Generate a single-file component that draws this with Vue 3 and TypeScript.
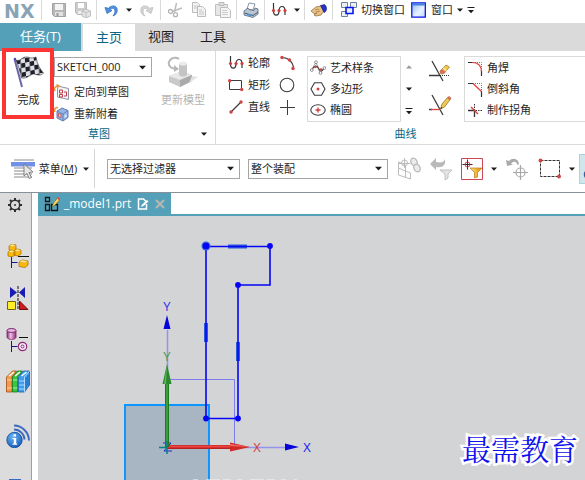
<script setup lang="ts">
import { ref } from 'vue'

interface Tool {
  icon: string
  label: string
}

const tabs = ['主页', '视图', '工具']
const activeTab = ref('主页')

const sketch = ref('SKETCH_000')
const filter = ref('无选择过滤器')
const scope = ref('整个装配')

const sketchTools: Tool[] = [
  { icon: 'orient', label: '定向到草图' },
  { icon: 'reattach', label: '重新附着' },
]
const basicCurves: Tool[] = [
  { icon: 'profile', label: '轮廓' },
  { icon: 'rect', label: '矩形' },
  { icon: 'line', label: '直线' },
]
const plainCurves: Tool[] = [
  { icon: 'arc', label: '圆弧' },
  { icon: 'circle', label: '圆' },
  { icon: 'point', label: '点' },
]
const gallery: Tool[] = [
  { icon: 'spline', label: '艺术样条' },
  { icon: 'polygon', label: '多边形' },
  { icon: 'ellipse', label: '椭圆' },
]
const corners: Tool[] = [
  { icon: 'fillet', label: '角焊' },
  { icon: 'chamfer', label: '倒斜角' },
  { icon: 'corner', label: '制作拐角' },
]
const resources: Tool[] = [
  { icon: 'assembly', label: '装配导航器' },
  { icon: 'constraint', label: '约束导航器' },
  { icon: 'partnav', label: '部件导航器' },
  { icon: 'books', label: '重用库' },
]
</script>

<template>
  <div class="page">
    <svg class="sprite" aria-hidden="true">
      <defs>
        <linearGradient id="gWin" x1="0" y1="0" x2="1" y2="1">
          <stop offset="0" stop-color="#8fb9ee" /><stop offset=".6" stop-color="#e8f3ff" /><stop offset="1" stop-color="#bcd8fa" />
        </linearGradient>
        <linearGradient id="gGold" x1="0" y1="0" x2="1" y2="0">
          <stop offset="0" stop-color="#ffe680" /><stop offset="1" stop-color="#e08a00" />
        </linearGradient>
        <linearGradient id="gPurple" x1="0" y1="0" x2="1" y2="0">
          <stop offset="0" stop-color="#8a2a78" /><stop offset=".4" stop-color="#eac0e2" /><stop offset="1" stop-color="#8a2a78" />
        </linearGradient>
        <radialGradient id="gInfo" cx=".4" cy=".3" r=".8">
          <stop offset="0" stop-color="#6db5f5" /><stop offset="1" stop-color="#0c55b4" />
        </radialGradient>
        <pattern id="check" width="9" height="9" patternUnits="userSpaceOnUse" patternTransform="translate(3 4) rotate(-12) skewX(-8)">
          <rect width="9" height="9" fill="#dfe0e6" />
          <rect width="4.500" height="4.500" fill="#20202a" /><rect x="4.500" y="4.500" width="4.500" height="4.500" fill="#20202a" />
        </pattern>
      </defs>
      <symbol id="down" viewBox="0 0 6 4"><path d="M0 0.500h6L3 3.800z" fill="#1c1c1c" /></symbol>
      <symbol id="up" viewBox="0 0 6 4"><path d="M0 3.500h6L3 0.200z" fill="#9a9a9a" /></symbol>
      <symbol id="more" viewBox="0 0 8 8"><path d="M0.500 1h7v1h-7zM1 4h6L4 7.300z" fill="#1c1c1c" /></symbol>
      <symbol id="save" viewBox="0 0 16 16">
        <path d="M1.500 1.500h13v13h-11l-2-2z" fill="#b7b7b7" stroke="#a2a2a2" /><path d="M4 2h8v6H4z" fill="#f4f4f4" /><path d="M4 10h8v4H4z" fill="#e2e2e2" /><path d="M5.500 11h2v3h-2z" fill="#999" />
      </symbol>
      <symbol id="saveas" viewBox="0 0 16 16">
        <path d="M.5 .5h11v12h-9l-2-2z" fill="#cdcdcd" stroke="#b8b8b8" /><path d="M3 1h6v5H3z" fill="#fff" /><path d="M3 9h4v3H3z" fill="#eee" />
        <path d="M7 9l4-2 4.500 2v5L11 16l-4-2z" fill="#e4e4e4" stroke="#b5b5b5" stroke-width=".8" /><path d="M7 9l4 1.500L15.500 9M11 10.500V16" fill="none" stroke="#c0c0c0" />
      </symbol>
      <symbol id="undo" viewBox="0 0 16 16">
        <path d="M2 5.500l2 6 5-3-2.200-.8C9 5.500 12 6 12 9c0 2-.8 3.500-2 5 3-1 4.500-3.500 4.200-6.500C13.800 3.500 9 2.500 5.400 6.300z" fill="#5290e0" stroke="#2f6ec4" stroke-width=".8" />
      </symbol>
      <symbol id="redo" viewBox="0 0 16 16">
        <path d="M14 5.500l-2 6-5-3 2.200-.8C7 5.500 4 6 4 9c0 2 .8 3.500 2 5C3 13 1.500 10.500 1.800 7.500 2.200 3.500 7 2.500 10.600 6.300z" fill="#d6d6d6" stroke="#bbb" stroke-width=".8" />
      </symbol>
      <symbol id="cut" viewBox="0 0 16 16">
        <path d="M9.500 1L7.500 10M15 6L5 9.500" stroke="#bbb" stroke-width="1.500" /><circle cx="3.500" cy="9.500" r="2" fill="none" stroke="#b4b4b4" stroke-width="1.300" /><circle cx="8.500" cy="12.700" r="2" fill="none" stroke="#b4b4b4" stroke-width="1.300" />
      </symbol>
      <symbol id="copy" viewBox="0 0 16 16">
        <g fill="#f3f3f3" stroke="#bcbcbc"><path d="M1.500 .5h5l2 2v8h-7z" /><path d="M6.500 4.500h5l3 3v7h-8z" /></g><path d="M3 4h4M3 6h3M8 8h3M8 10h5M8 12h5" stroke="#c6c6c6" />
      </symbol>
      <symbol id="paste" viewBox="0 0 16 16">
        <path d="M.5 2.500h12v11H.5z" fill="#e7e7e7" stroke="#c0c0c0" /><path d="M4 .5h5v3H4z" fill="#ddd" stroke="#bbb" /><path d="M5.500 5.500h7l3 3v7h-10z" fill="#f6f6f6" stroke="#bdbdbd" /><path d="M7 8.500h5M7 10.500h6M7 12.500h6" stroke="#ccc" />
      </symbol>
      <symbol id="print" viewBox="0 0 16 16">
        <path d="M6 1l6 1-2 6-6-1z" fill="#fff" stroke="#6b7d92" stroke-width=".8" /><path d="M1 9l4-3 1 1.500 5 1L12 6l3 1v5l-5 3.500L1 13z" fill="#b9c4d0" stroke="#536579" stroke-width=".8" /><path d="M1.500 11L10 13.500 15 10" fill="none" stroke="#475a70" /><path d="M4 12.500l4 1" stroke="#4d98e0" stroke-width="1.500" />
      </symbol>
      <symbol id="profile" viewBox="0 0 16 16">
        <path d="M2.500 1v8c0 5.500 5.500 5.500 5.500 0 0-6 6-6 6 0v4" fill="none" stroke="#333" stroke-width="1.200" /><g fill="#d23c3c"><circle cx="2.500" cy="8.500" r="1.600" /><circle cx="8" cy="8.500" r="1.600" /><circle cx="14" cy="8.500" r="1.600" /></g>
      </symbol>
      <symbol id="hand" viewBox="0 0 16 16">
        <path d="M0 9l5-4 5-1 3 5-3 4-5 1-2-1 3-2-3 .5z" fill="#ecc184" stroke="#947449" stroke-width=".8" /><path d="M9.500 3.500l4-1c3 2 2.500 7-.5 8z" fill="#2631c8" stroke="#111a82" stroke-width=".6" /><path d="M4 8l4-1M5 10l4-1" stroke="#957246" stroke-width=".7" />
      </symbol>
      <symbol id="switch" viewBox="0 0 16 16">
        <g fill="#eaf0f5" stroke="#6e8399"><path d="M.5 .5h6v5h-6zM9.500 .5h6v5h-6zM.5 9.500h6v5h-6z" /></g><path d="M5 5.500h7v6H5z" fill="#e5f1ff" stroke="#0b16ef" stroke-width="1.600" />
      </symbol>
      <symbol id="window" viewBox="0 0 16 16"><path d="M.8 .8h13.500v14.400H.8z" fill="url(#gWin)" stroke="#0b16ef" stroke-width="1.300" /><path d="M1.500 1.500H14v2H1.500z" fill="#4382dd" /></symbol>

      <symbol id="flag" viewBox="0 0 32 32">
        <path d="M1.500 3l7.500 28" stroke="#6a68a8" stroke-width="2" /><circle cx="2" cy="3" r="1.200" fill="#4e40bd" />
        <path d="M3 4c4 2 6-3 10-3s5 2 10 0c1 7 4 12 7.500 16-3 4-7 1-10 1s-6 5-12 4C7 15 5 9 3 4z" fill="url(#check)" stroke="#34343e" stroke-width=".6" />
      </symbol>
      <symbol id="orient" viewBox="0 0 16 16">
        <path d="M3.500 2l11 2.500v11l-11-2.500z" fill="#f5f5f6" stroke="#8d95a2" /><path d="M5.500 6h3v3h-3zM10 8h2.500v4H10M5.500 10.500h3v2.500h-3z" fill="none" stroke="#c33b49" /><path d="M1 7C0 4 1 2 4 2M2.500 .5L5 2 3 4" fill="none" stroke="#ed9438" stroke-width="1.400" />
      </symbol>
      <symbol id="reattach" viewBox="0 0 16 16">
        <path d="M3 5l5-3 6 2.500v7L9 15l-6-3z" fill="#95b6e6" stroke="#4263a0" stroke-width=".8" /><path d="M3 5l6 3 5-3.500M9 8v7" fill="none" stroke="#5779b3" stroke-width=".8" /><path d="M4.500 7.500l2.500 1v3l-2.500-1z" fill="#f4dfe5" stroke="#c33b49" stroke-width=".8" /><path d="M10.500 9l2-1v3l-2 1z" fill="#d4e4fb" /><path d="M1 6C0 3 1 1.500 4 1.500" fill="none" stroke="#ed9438" stroke-width="1.600" />
      </symbol>
      <symbol id="update" viewBox="0 0 32 32">
        <path d="M2 20l13-5 10 4v6l-12 6-11-5z" fill="#c9c9c9" /><path d="M2 20l11 4 12-5-10-4z" fill="#e8e8e8" /><path d="M13 24v7l12-6v-6z" fill="#aaa" /><path d="M12 7h8v12c-2 2-6 2-8 0z" fill="#c4c4c4" /><ellipse cx="16" cy="7.500" rx="4" ry="2" fill="#ececec" /><path d="M25 20l6 1-9 6" fill="#e2e2e2" />
        <path d="M11 13C3 13 1 9 2 6c2-5 7-5 10-3" fill="none" stroke="#b7b7b7" stroke-width="2" /><path d="M7 9l5 4-5 3" fill="#b7b7b7" />
      </symbol>
      <symbol id="rect" viewBox="0 0 16 16"><path d="M1.500 3.500h12v9h-12z" fill="none" stroke="#3c3c3c" /><g fill="#d24242"><circle cx="1.700" cy="3.700" r="1.700" /><circle cx="13.700" cy="12.500" r="1.700" /></g></symbol>
      <symbol id="line" viewBox="0 0 16 16"><path d="M3 13L13 3" stroke="#3c3c3c" stroke-width="1.200" /><g fill="#d24242"><circle cx="3" cy="13" r="1.700" /><circle cx="13" cy="3" r="1.700" /></g></symbol>
      <symbol id="arc" viewBox="0 0 16 16"><path d="M3 2.500C9 2.500 14.500 7 14.500 14" fill="none" stroke="#3c3c3c" stroke-width="1.200" /><g fill="#d24242"><circle cx="3" cy="2.500" r="1.700" /><circle cx="10.500" cy="5" r="1.700" /><circle cx="14" cy="13.500" r="1.700" /></g></symbol>
      <symbol id="circle" viewBox="0 0 16 16"><circle cx="8" cy="8" r="6.800" fill="none" stroke="#3c3c3c" stroke-width="1.100" /></symbol>
      <symbol id="point" viewBox="0 0 16 16"><path d="M8.500 1v15M1 8.500h15" stroke="#3c3c3c" /></symbol>
      <symbol id="spline" viewBox="0 0 16 16"><path d="M1.500 10L6 2l4 11 4-5" fill="none" stroke="#888" stroke-width=".8" /><path d="M1.500 10C5 5 7 5 9 9s3 2 5-1" fill="none" stroke="#444" stroke-width="1.200" /><g fill="#fff" stroke="#777" stroke-width=".8"><circle cx="6" cy="2.300" r="1.400" /><circle cx="1.800" cy="10" r="1.400" /><circle cx="10.500" cy="13" r="1.400" /><circle cx="14.500" cy="8" r="1.400" /></g><circle cx="5.500" cy="7" r="1.200" fill="#d24242" /><circle cx="11" cy="9.500" r="1.200" fill="#d24242" /></symbol>
      <symbol id="polygon" viewBox="0 0 16 16"><path d="M4.500 1.800h7L15 8l-3.500 6.200h-7L1 8z" fill="none" stroke="#3c3c3c" stroke-width="1.100" /><circle cx="8" cy="8" r="1.500" fill="#d24242" /></symbol>
      <symbol id="ellipse" viewBox="0 0 16 16"><ellipse cx="8" cy="8" rx="7.200" ry="5.200" fill="none" stroke="#3c3c3c" stroke-width="1.100" /><path d="M8 5.500v5M5.500 8h5" stroke="#d24242" stroke-width="1.400" /></symbol>
      <symbol id="trim" viewBox="0 0 24 24"><path d="M4 2l11 20M1 16.500h11" fill="none" stroke="#3c3c3c" stroke-width="1.300" /><path d="M12 16.500h10" stroke="#333" stroke-dasharray="1 1" /><path d="M12 12l6-6 3.500 2-5.500 6.500-3 .5z" fill="#f0ca54" stroke="#a4812c" stroke-width=".8" /><path d="M12 12l2-2 3.500 3-1.500 1.500-3 .5z" fill="#dc6a5e" /><path d="M15 9l3.500 2.500" stroke="#fff6c2" /></symbol>
      <symbol id="extend" viewBox="0 0 24 24"><path d="M4 2l11 20M1 16.500h3" fill="none" stroke="#3c3c3c" stroke-width="1.300" /><path d="M3 16.500h9" stroke="#df3f3f" stroke-width="1.300" /><path d="M12.500 16l1.500-5 6-7 2.500 2-6 8z" fill="#f0ca54" stroke="#8f752c" stroke-width=".8" /><path d="M19 5l2-2 2.500 2-2 2.300z" fill="#d36d58" /><path d="M12.500 16l.7-2 1.300 1z" fill="#222" /></symbol>
      <symbol id="fillet" viewBox="0 0 16 16"><path d="M1 2.500h5M14.500 10v6" stroke="#333" stroke-width="1.200" /><path d="M6 2.500h8.500V10" fill="none" stroke="#777" stroke-dasharray="1 1" /><path d="M5 2.500c6 0 9.500 3 9.500 9" fill="none" stroke="#df3f3f" stroke-width="1.200" /></symbol>
      <symbol id="chamfer" viewBox="0 0 16 16"><path d="M1 2.500h5M14.500 10v6" stroke="#333" stroke-width="1.200" /><path d="M6 2.500h8.500V10" fill="none" stroke="#777" stroke-dasharray="1 1" /><path d="M6 2.500l8.500 8" fill="none" stroke="#df3f3f" stroke-width="1.200" /></symbol>
      <symbol id="corner" viewBox="0 0 16 16"><path d="M1 8.500h6.500V15" fill="none" stroke="#333" stroke-width="1.300" /><path d="M7.500 2v6.500H15" fill="none" stroke="#333" stroke-dasharray="1.500 1" /><path d="M4 5l7 7" stroke="#df3f3f" stroke-width="1.400" /></symbol>

      <symbol id="menu" viewBox="0 0 24 22"><path d="M3 2h20M3 10h18M3 13h18M3 16h18M3 19h18" stroke="#8a8a8a" stroke-width="1" /><path d="M0 4h24v4.500H0z" fill="#6f90e6" /><path d="M13 6l9 8-4 .5 2.500 5-2.300 1-2.200-5-3 2.500z" fill="#e7e7e7" stroke="#777" stroke-width=".9" /></symbol>
      <symbol id="chain" viewBox="0 0 24 24"><g fill="none" stroke="#bcbcbc"><path d="M1.500 5v13l12 4v-6l-5-2V8l-7-3M1.500 11l7 3v6M7.500 1v10M2 6.500h11" /><circle cx="7.500" cy="6" r="3" /></g><g fill="#ececec" stroke="#bababa" stroke-width="1.400"><ellipse cx="17" cy="5" rx="3" ry="4" transform="rotate(-25 17 5)" /><ellipse cx="20" cy="11" rx="3" ry="4" transform="rotate(-25 20 11)" /></g></symbol>
      <symbol id="resetfilter" viewBox="0 0 24 24"><path d="M1 7l6-6v4c6 1 8 0 9-3 1 6-2 9-9 8v3z" fill="#b9b9b9" /><path d="M11 13h12l-4 4v4l-3 2v-6z" fill="#e5e5e5" stroke="#c0c0c0" /></symbol>
      <symbol id="filter" viewBox="0 0 22 22"><path d="M.5 .5h21v21H.5z" fill="#fff" stroke="#cd4652" /><g fill="none" stroke="#2a2a2a"><path d="M6.500 1.500v10M1.500 6.500h10" /><circle cx="6.500" cy="6.500" r="2.500" stroke="#cd4652" /></g><path d="M9 10h12l-4.500 4.500V19l-3 1v-5.500z" fill="url(#gGold)" stroke="#b5791a" stroke-width=".7" /></symbol>
      <symbol id="snapback" viewBox="0 0 24 24"><path d="M1 3l1 6 6-1.500-2-1C9 3.500 12 4.500 12 7.500h2C14 2 8-.5 4 4z" fill="#aaa" /><g fill="none" stroke="#a8a8a8" stroke-width="1.200"><path d="M15.500 8v15M8 15.500h15" /><circle cx="15.500" cy="15.500" r="4.500" /></g></symbol>
      <symbol id="marquee" viewBox="0 0 24 24"><path d="M3.500 3.500h19v16h-19z" fill="none" stroke="#333" stroke-dasharray="3 1" /><g fill="#d24242"><circle cx="3.500" cy="3.500" r="2" /><circle cx="22" cy="19.500" r="2" /></g></symbol>
      <symbol id="curveon" viewBox="0 0 24 24"><path d="M4 21c-3-4-1-7 3-8M7 21c5 0 8-3 8-8" fill="none" stroke="#3d5a9a" stroke-width="1.600" /></symbol>

      <symbol id="gear" viewBox="0 0 14 14"><circle cx="7" cy="7" r="4.700" fill="none" stroke="#2e2e2e" stroke-width="1.500" /><path d="M7 0v2.500M7 11.500V14M0 7h2.500M11.500 7H14M2 2l1.800 1.800M10.200 10.200L12 12M12 2l-1.800 1.800M3.800 10.200L2 12" stroke="#2e2e2e" stroke-width="2" /><circle cx="7" cy="7" r="1" fill="#2e2e2e" /></symbol>
      <symbol id="assembly" viewBox="0 0 24 24">
        <path d="M5.500 12v12M5.500 18.500h6" fill="none" stroke="#14148f" /><path d="M12 12.500h11" stroke="#111" />
        <g fill="#ffb90d" stroke="#a66b00" stroke-width=".7"><path d="M3 2l3-2 4 1v4L7 7 3 6zM2 8l3-2 4 1v4l-3 2-4-1zM8 7l3-2 4 1v4l-3 2-4-1zM13 18l3-2 6 1v4l-3 2.500-6-1z" /></g>
        <path d="M3 2l4 1 3-2-4-1zM2 8l4 1 3-2-4-1zM8 7l4 1 3-2-4-1zM13 18l6 1 3-2-6-1z" fill="#ffe88a" stroke="#c38300" stroke-width=".4" />
      </symbol>
      <symbol id="constraint" viewBox="0 0 24 24"><path d="M4 1v11l7-5.500zM19 1v11l-6-5.500z" fill="#1a1ab4" /><path d="M12 0v24" stroke="#111" stroke-dasharray="3 1" /><path d="M1.500 15.500h8v8h-8z" fill="#ffee28" stroke="#6e6600" /><path d="M13.500 15v8.500h8.500z" fill="#cf1b1b" stroke="#6c0e0e" /></symbol>
      <symbol id="partnav" viewBox="0 0 24 24"><path d="M1 2.500v7c1 2.500 8 2.500 9 0v-7z" fill="url(#gPurple)" stroke="#7f256f" stroke-width=".8" /><ellipse cx="5.500" cy="2.500" rx="4.500" ry="2" fill="#e3b7da" stroke="#7f256f" /><path d="M5.500 13v11M5.500 18.500h6" stroke="#14148f" /><path d="M13 9.500h9" stroke="#111" /><circle cx="16.500" cy="18.500" r="4.200" fill="#f7e7f4" stroke="#8e2c7c" stroke-width="1.200" /><circle cx="16.500" cy="18.500" r="1.500" fill="none" stroke="#8e2c7c" /></symbol>
      <symbol id="books" viewBox="0 0 24 24">
        <g stroke-width=".8"><path d="M0.500 7l6-6h4l-4.500 6v15H.5z" fill="#f49a49" stroke="#a34d10" /><path d="M6.500 7l5-6h5l-5 6v15h-5z" fill="#38c93c" stroke="#10741a" /><path d="M12.500 7l5-6h6v14l-5 7h-6z" fill="#3d9df0" stroke="#135ea9" /></g>
        <path d="M3 6l5-4M9 6l5-4M15.500 6l5-4" stroke="#fff" stroke-width="1.500" /><path d="M18.500 7l5-6M18.500 7v15M1 10h5M1 18h5M7 10h4.500M7 18h4.500M13 11h5.500M13 15h5.500M13 19h5.500" stroke="#ffffff99" /><path d="M20 7v12M22 5v11" stroke="#1563b8" />
      </symbol>
      <symbol id="info" viewBox="0 0 24 24"><g fill="none" stroke="#3c68bd" stroke-width="1.900"><path d="M8 1.500c8 0 15 7 15 15M8 5.500c6 0 10.500 5 10.500 10M8 9c4 0 7 3 7 7" /></g><circle cx="8.500" cy="16" r="7.700" fill="url(#gInfo)" stroke="#114b9b" stroke-width=".8" /><path d="M7.500 10.200h2.500v2.200H7.500zM6.500 14h3.700v5.500h1v1.300H6.500v-1.300h1.300v-4.200H6.500z" fill="#fff" /></symbol>
      <symbol id="doc" viewBox="0 0 24 24"><path d="M3 1h12v21H3z" fill="#386bc0" /></symbol>
      <symbol id="part" viewBox="0 0 16 16"><path d="M1.500 1.500h4v4h-4zM1.500 8.500h4v6h-4zM7.500 8.500h6v6h-6z" fill="none" stroke="#161616" stroke-width="1.300" /><path d="M8 11l1.500-4 4-5 2 2-4.500 5z" fill="#ffd95c" stroke="#725f20" stroke-width=".6" /><path d="M13 2l1.500-1L16 3l-1 1.300z" fill="#e24747" /></symbol>
      <symbol id="edited" viewBox="0 0 12 12"><path d="M9.500 6v5h-8V1h5l3 3" fill="none" stroke="#fff" stroke-width="1.500" /><path d="M4 9l1-2.500L10 2l1.500 1.500L6.500 8z" fill="#fff" /></symbol>
      <symbol id="close" viewBox="0 0 10 10"><path d="M1 1l8 8M9 1L1 9" stroke="#b9b7b5" stroke-width="2" /></symbol>
    </svg>

    <header class="quick">
      <span class="logo">NX</span>
      <i class="sep"></i>
      <button class="qb first" aria-label="保存"><svg class="i16"><use href="#save" /></svg></button>
      <button class="qb" aria-label="另存为"><svg class="i16"><use href="#saveas" /></svg></button>
      <i class="sep"></i>
      <button class="qb" aria-label="撤消"><svg class="i16"><use href="#undo" /></svg></button>
      <button class="drop" aria-label="撤消列表"><svg class="tri"><use href="#down" /></svg></button>
      <button class="qb" aria-label="重做"><svg class="i16"><use href="#redo" /></svg></button>
      <i class="sep"></i>
      <button class="qb" aria-label="剪切"><svg class="i16"><use href="#cut" /></svg></button>
      <button class="qb" aria-label="复制"><svg class="i16"><use href="#copy" /></svg></button>
      <button class="qb" aria-label="粘贴"><svg class="i16"><use href="#paste" /></svg></button>
      <i class="sep"></i>
      <button class="qb" aria-label="打印"><svg class="i16"><use href="#print" /></svg></button>
      <i class="sep"></i>
      <button class="qb" aria-label="轮廓"><svg class="i16"><use href="#profile" /></svg></button>
      <button class="drop" aria-label="曲线列表"><svg class="tri"><use href="#down" /></svg></button>
      <i class="sep"></i>
      <button class="qb" aria-label="重复命令"><svg class="i16"><use href="#hand" /></svg></button>
      <i class="sep"></i>
      <button class="wb"><svg class="i16"><use href="#switch" /></svg>切换窗口</button>
      <button class="wb"><svg class="i16"><use href="#window" /></svg>窗口<svg class="tri"><use href="#down" /></svg></button>
      <button class="drop" aria-label="更多"><svg class="i8"><use href="#more" /></svg></button>
    </header>

    <nav class="tabs">
      <button class="tab task">任务(T)</button>
      <button v-for="t in tabs" :key="t" class="tab" :class="{ active: t === activeTab }" @click="activeTab = t">{{ t }}</button>
    </nav>

    <section class="ribbon">
      <div class="group sketch-group">
        <div class="content">
          <button class="big finish"><svg class="i32"><use href="#flag" /></svg>完成</button>
          <div class="stack sketch-stack">
            <label class="combo">
              <select v-model="sketch" aria-label="草图名称"><option>SKETCH_000</option></select>
              <svg class="caret"><use href="#down" /></svg>
            </label>
            <button v-for="t in sketchTools" :key="t.icon" class="row"><svg class="i16"><use :href="'#' + t.icon" /></svg>{{ t.label }}</button>
          </div>
          <button class="big update" disabled><svg class="i32"><use href="#update" /></svg>更新模型</button>
        </div>
        <footer class="caption"><span>草图</span><button class="drop" aria-label="草图选项"><svg class="tri"><use href="#down" /></svg></button></footer>
      </div>

      <div class="group curve-group">
        <div class="content">
          <div class="stack">
            <button v-for="t in basicCurves" :key="t.icon" class="row"><svg class="i16"><use :href="'#' + t.icon" /></svg>{{ t.label }}</button>
          </div>
          <div class="stack plain">
            <button v-for="t in plainCurves" :key="t.icon" class="row" :aria-label="t.label"><svg class="i16"><use :href="'#' + t.icon" /></svg></button>
          </div>
          <div class="stack gallery">
            <button v-for="t in gallery" :key="t.icon" class="row"><svg class="i16"><use :href="'#' + t.icon" /></svg>{{ t.label }}</button>
          </div>
          <div class="stack scroller">
            <button class="row" aria-label="上一行"><svg class="tri"><use href="#up" /></svg></button>
            <button class="row" aria-label="下一行"><svg class="tri"><use href="#down" /></svg></button>
            <button class="row" aria-label="展开"><svg class="i8"><use href="#more" /></svg></button>
          </div>
          <div class="edit">
            <button aria-label="快速修剪"><svg class="i24"><use href="#trim" /></svg></button>
            <button aria-label="快速延伸"><svg class="i24"><use href="#extend" /></svg></button>
          </div>
          <div class="stack gallery corner">
            <button v-for="t in corners" :key="t.icon" class="row"><svg class="i16"><use :href="'#' + t.icon" /></svg>{{ t.label }}</button>
          </div>
        </div>
        <footer class="caption"><span>曲线</span></footer>
      </div>
    </section>

    <section class="selection">
      <button class="menu"><svg class="i24"><use href="#menu" /></svg><span>菜单(<u>M</u>)</span><svg class="tri"><use href="#down" /></svg></button>
      <label class="combo filter">
        <select v-model="filter" aria-label="选择过滤器"><option>无选择过滤器</option></select>
        <svg class="caret"><use href="#down" /></svg>
      </label>
      <label class="combo scope">
        <select v-model="scope" aria-label="选择范围"><option>整个装配</option></select>
        <svg class="caret"><use href="#down" /></svg>
      </label>
      <div class="picks">
        <button aria-label="关联"><svg class="i24"><use href="#chain" /></svg></button>
        <button aria-label="重置过滤器"><svg class="i24"><use href="#resetfilter" /></svg></button>
        <button aria-label="过滤器"><svg class="i22"><use href="#filter" /></svg></button>
        <button aria-label="过滤器列表"><svg class="tri"><use href="#down" /></svg></button>
        <button aria-label="恢复捕捉"><svg class="i24"><use href="#snapback" /></svg></button>
        <button aria-label="矩形选择"><svg class="i24"><use href="#marquee" /></svg></button>
        <button aria-label="选择方式"><svg class="tri"><use href="#down" /></svg></button>
      </div>
      <button class="toggled" aria-label="曲线上的点"><svg class="i24"><use href="#curveon" /></svg></button>
    </section>

    <div class="work">
      <aside class="side">
        <button class="opt" aria-label="选项"><svg class="i14"><use href="#gear" /></svg></button>
        <button v-for="r in resources" :key="r.icon" class="res" :aria-label="r.label"><svg class="i24"><use :href="'#' + r.icon" /></svg></button>
        <button class="res web" aria-label="信息"><svg class="i24"><use href="#info" /></svg></button>
        <button class="res" aria-label="历史记录"><svg class="i24"><use href="#doc" /></svg></button>
      </aside>
      <main class="main">
        <div class="files">
          <div class="file">
            <svg class="i16"><use href="#part" /></svg><span>_model1.prt</span><svg class="i12"><use href="#edited" /></svg>
            <button aria-label="关闭"><svg class="i10"><use href="#close" /></svg></button>
          </div>
        </div>
        <div class="canvas">
          <svg class="drawing">
            <g transform="translate(-38 -216)">
              <path d="M125 481V405h84v76" fill="#a7b6c2" stroke="#0d96ff" stroke-width="2" />
              <path d="M167.500 379.500h67v67h-67z" fill="none" stroke="#7c7cf0" />
              <path d="M167.500 446V330M167 447.500h118" stroke="#9494ec" stroke-width="1.500" />
              <path class="halo" d="M228 246.500h19M206 323v19M238 342v19" />
              <path d="M206 246.500h64v38.500h-32v133.500h-32z" fill="none" stroke="#0505f5" stroke-width="1.600" />
              <circle cx="206" cy="246" r="4.500" fill="#3566dc" />
              <g fill="#0505f5"><circle cx="206" cy="246" r="3.300" /><circle cx="270" cy="246" r="2.900" /><circle cx="238" cy="285" r="2.900" /><circle cx="206" cy="418.500" r="2.900" /><circle cx="238" cy="418.500" r="2.900" /></g>
              <path d="M167 315l3.500 14h-7zM299 447l-14 3.500v-7z" fill="#0505d8" />
              <path d="M163 443h8l-7 8h8" fill="none" stroke="#2525d8" />
              <path d="M167 447h64" stroke="#b82020" stroke-width="4" /><path d="M168 446.500h62" stroke="#f04343" stroke-width="2" />
              <path d="M250 447l-20 4.500v-9z" fill="#cf2929" /><path d="M250 447l-20-1v-2z" fill="#f36b5f" />
              <path d="M167 447V383" stroke="#247724" stroke-width="4" /><path d="M167 446V383" stroke="#39a039" stroke-width="2" />
              <path d="M167 364l4.500 20h-9z" fill="#2c882c" /><path d="M167 364l-1 20h-2z" fill="#5db75d" />
              <path d="M159 447.500h9M167 441v13" stroke="#068080" stroke-width="1.500" />
              <g class="axis"><text x="167" y="311" fill="#3030e8">Y</text><text x="307" y="452" fill="#2020ee">X</text><text x="257" y="452" fill="#d24040">X</text><text x="167" y="361" fill="#4a9a4a">Y</text></g>
              <path d="M193 479.500h104" stroke="#f0f0f0" stroke-opacity=".6" stroke-dasharray="5 8 14 3 8 6" />
            </g>
          </svg>
          <span class="mark">最需教育</span>
        </div>
      </main>
    </div>
  </div>
</template>

<style>
body {
  margin: 0;
}
</style>

<style scoped>
.page {
  display: flex;
  flex-direction: column;
  height: 100vh;
  overflow: hidden;
  background: #fff;
  color: #1e1e1e;
  font: 11px/16px "Open Sans", "Noto Sans CJK SC", sans-serif;
  white-space: nowrap;
}
.sprite { position: absolute; width: 0; height: 0; }
svg { display: block; flex: none; }
button { display: flex; align-items: center; justify-content: center; flex: none; padding: 0; border: 0; background: none; color: inherit; font: inherit; }
.tri { width: 6px; height: 4px; }
.i8 { width: 8px; height: 8px; }
.i10 { width: 10px; height: 10px; }
.i12 { width: 12px; height: 12px; }
.i14 { width: 14px; height: 14px; }
.i16 { width: 16px; height: 16px; }
.i22 { width: 22px; height: 22px; }
.i24 { width: 24px; height: 24px; }
.i32 { width: 32px; height: 32px; }

.quick { display: flex; align-items: center; flex: none; height: 20px; padding-bottom: 3px; }
.logo { align-self: flex-start; width: 36px; padding-left: 4px; color: #88a4b6; font: bold 19px/22px "DejaVu Sans", sans-serif; }
.sep { width: 1px; height: 20px; margin: 0 2px 0 1px; background: #d9d9d9; }
.qb { width: 24px; height: 20px; }
.qb.first { margin-left: 3px; }
.drop { width: 12px; height: 16px; }
.wb { gap: 4px; padding-left: 6px; }
.wb .tri { margin-right: 2px; }

.tabs { display: flex; flex: none; height: 28px; background: #dadada; }
.tab { width: 52px; padding-bottom: 2px; font-size: 13px; }
.task { width: 81px; margin-right: 2px; background: #54a0b9; color: #fff; }
.active { margin-top: 1px; background: #fff; color: #086584; }

.ribbon { display: flex; flex: none; border-bottom: 1px solid #dadada; }
.group { display: flex; flex-direction: column; padding-top: 1px; }
.content { display: flex; height: 72px; }
.caption { display: flex; align-items: center; justify-content: center; height: 20px; color: #086584; }
.sketch-group { width: 215px; border-right: 1px solid #dadada; }
.sketch-group .caption { padding-right: 5px; }
.sketch-group .caption span { flex: 1; text-align: center; }
.curve-group { flex: 1; min-width: 0; }
.curve-group .caption { padding-left: 10px; }
.big { flex-direction: column; justify-content: flex-start; gap: 4px; padding-top: 4px; }
.finish { position: relative; width: 54px; padding-left: 3px; }
.finish::after { content: ""; position: absolute; left: 2px; top: -4px; width: 44px; height: 63px; border: 4px solid #fb3434; }
.update { width: 62px; color: #b5b5b5; }
.stack { display: flex; flex-direction: column; }
.row { justify-content: flex-start; gap: 4px; height: 22px; }
.sketch-stack { width: 98px; padding-top: 5px; }
.sketch-stack .combo { margin-bottom: 4px; }

.combo { display: grid; align-items: center; flex: none; height: 20px; }
.combo select { grid-area: 1 / 1; width: 100%; height: 20px; padding: 0 16px 0 2px; border: 1px solid #a5a5a5; border-radius: 0; background: #fff; color: inherit; font: inherit; appearance: none; }
.caret { grid-area: 1 / 1; justify-self: end; width: 7px; height: 5px; margin-right: 6px; pointer-events: none; }

.curve-group .content { padding-left: 12px; }
.plain { margin: 0 12px 0 9px; }
.gallery { box-sizing: border-box; width: 94px; height: 66px; margin-top: 4px; padding: 0 2px; border: 1px solid #dadada; }
.gallery .row { height: 21px; }
.scroller { width: 16px; margin-top: 4px; }
.scroller .row { justify-content: center; }
.edit { display: flex; flex-direction: column; gap: 10px; margin: 7px 12px 0 11px; }
.corner { flex: 1; border-right: 0; }

.selection { display: flex; align-items: center; flex: none; height: 47px; border-bottom: 1px solid #87919a; }
.menu { gap: 4px; width: 95px; height: 39px; padding-left: 6px; border-right: 1px solid #d4d4d4; }
.menu span { margin-right: 2px; }
.filter { width: 133px; margin-left: 12px; }
.scope { width: 140px; margin: 0 9px 0 8px; }
.picks { display: flex; align-items: center; gap: 8px; flex: none; }
.toggled { width: 30px; height: 30px; margin-left: 4px; border: 1px solid #a9d6de; background: #cfe7ec; }

.work { display: flex; flex: 1; min-height: 0; }
.side { display: flex; flex-direction: column; flex: none; width: 31px; margin-right: 6px; border-right: 1px solid #a0a0a0; background: #dcdcdc; overflow: hidden; }
.side button { width: 36px; }
.side .opt { width: 30px; height: 24px; margin-bottom: 18px; }
.res { height: 42px; }
.side .web { height: 66px; }
.main { display: flex; flex: 1; flex-direction: column; min-width: 0; }
.files { display: flex; flex: none; border-bottom: 2px solid #54a0b9; }
.file { display: flex; align-items: center; gap: 6px; height: 21px; padding: 0 6px; background: #54a0b9; color: #fff; font-size: 12px; }
.file span { margin-left: -2px; }
.canvas { position: relative; flex: 1; min-height: 0; background: #d3d4d6; overflow: hidden; }
.drawing { width: 100%; height: 100%; }
.halo { fill: none; stroke: #2a5bd8; stroke-width: 4px; }
.axis { font: 13px "Open Sans", sans-serif; text-anchor: middle; }
.mark { position: absolute; right: 7px; bottom: 13px; color: #1111ec; font: 29px/36px "AR PL UKai CN", KaiTi, "Noto Serif CJK SC", "Noto Sans CJK SC", serif; -webkit-text-stroke: 5px #fff; paint-order: stroke fill; }
</style>
